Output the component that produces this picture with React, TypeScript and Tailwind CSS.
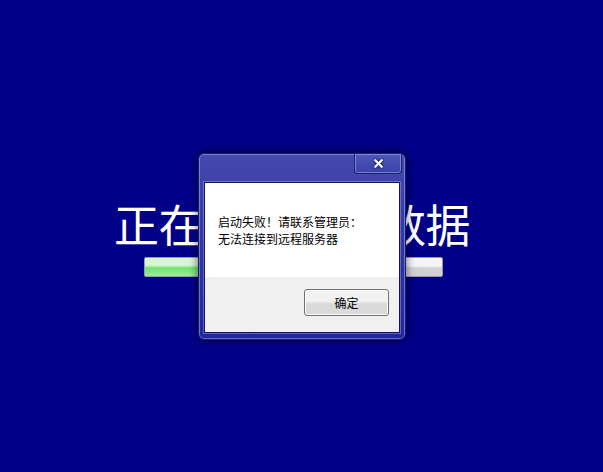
import { X } from "lucide-react";

const cjk = { fontFamily: '"Noto Sans CJK SC", "Liberation Sans", sans-serif' };

export default function App() {
  return (
    <div className="relative w-[603px] h-[472px] overflow-hidden bg-[#000088]" style={cjk}>
      {/* loading screen behind */}
      <div className="ml-[114px] pt-[201px] w-[360px] flex flex-col items-start">
        <h1 className="text-[45px] leading-[45px] text-white tracking-[-0.5px] whitespace-nowrap">
          正在加载系统数据
        </h1>
        <div className="mt-[11px] ml-[30px] w-[299px] h-[20px] rounded-[2px] border border-[#9a9a9a] bg-gradient-to-b from-[#f4f4f4] from-45% to-[#d2d2d2] to-55% overflow-hidden">
          <div className="h-full w-[45%] bg-gradient-to-b from-[#d8f6d6] from-40% via-[#72e272] via-55% to-[#9ceb9a]" />
        </div>
      </div>

      {/* error dialog */}
      <div className="absolute left-[198px] top-[153px] w-[208px] h-[187px] rounded-[6px] border border-[#161c6a] bg-gradient-to-b from-[#4649ad] via-[#3136a2] to-[#1f279c] shadow-[0_0_10px_rgba(0,0,0,0.6),inset_0_0_0_1px_rgba(170,180,255,0.5)]">
        <div className="flex h-[28px] justify-end pr-[3px]">
          <div className="w-[48px] h-[20px] rounded-b-[4px] border border-t-0 border-[#1a2070] bg-gradient-to-b from-[#4e56b8] to-[#3a42aa] shadow-[inset_0_0_0_1px_rgba(190,200,255,0.45)] flex items-center justify-center">
            <X className="w-[13px] h-[13px] text-white drop-shadow-[0_0_1px_#000]" strokeWidth={4} />
          </div>
        </div>
        <div className="mx-[5px] h-[151px] border border-[#10145e] shadow-[0_0_0_1px_rgba(150,160,240,0.5)] flex flex-col">
          <div className="h-[94px] bg-white pl-[13px] pt-[30px] text-[12px] leading-[17px] text-black">
            <p>启动失败！请联系管理员：</p>
            <p>无法连接到远程服务器</p>
          </div>
          <div className="flex-1 bg-[#f0f0f0] flex justify-end items-start pt-[12px] pr-[10px]">
            <button className="w-[85px] h-[27px] rounded-[3px] border border-[#707070] bg-gradient-to-b from-[#f2f2f2] from-45% to-[#dadada] to-55% text-[12px] text-black shadow-[inset_0_0_0_1px_#fcfcfc]">
              确定
            </button>
          </div>
        </div>
      </div>
    </div>
  );
}
